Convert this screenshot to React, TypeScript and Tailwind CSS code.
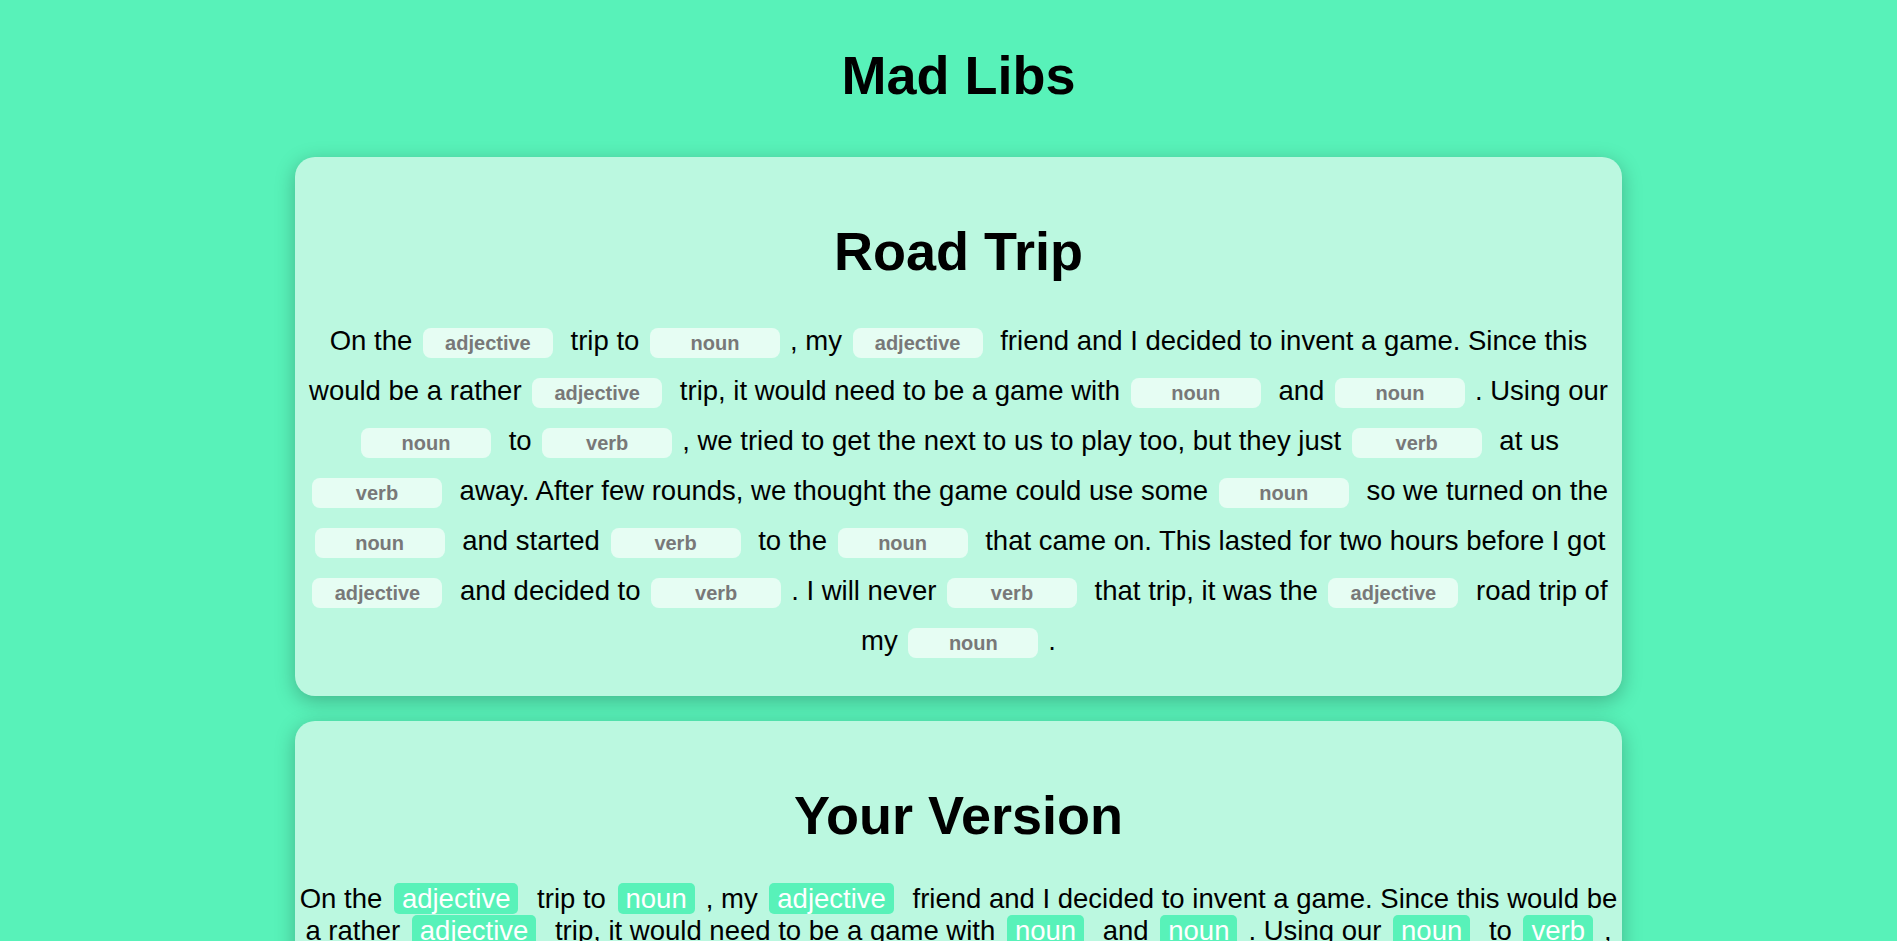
import React from 'react'

type Part = { text: string; blank: 'adjective' | 'noun' | 'verb' | null }

const story: Part[] = [
  { text: 'On the', blank: 'adjective' },
  { text: ' trip to', blank: 'noun' },
  { text: ', my', blank: 'adjective' },
  { text: ' friend and I decided to invent a game. Since this would be a rather', blank: 'adjective' },
  { text: ' trip, it would need to be a game with', blank: 'noun' },
  { text: ' and', blank: 'noun' },
  { text: '. Using our', blank: 'noun' },
  { text: ' to', blank: 'verb' },
  { text: ', we tried to get the next to us to play too, but they just', blank: 'verb' },
  { text: ' at us', blank: 'verb' },
  { text: ' away. After few rounds, we thought the game could use some', blank: 'noun' },
  { text: ' so we turned on the', blank: 'noun' },
  { text: ' and started', blank: 'verb' },
  { text: ' to the', blank: 'noun' },
  { text: ' that came on. This lasted for two hours before I got', blank: 'adjective' },
  { text: ' and decided to', blank: 'verb' },
  { text: '. I will never', blank: 'verb' },
  { text: ' that trip, it was the', blank: 'adjective' },
  { text: ' road trip of my', blank: 'noun' },
  { text: '.', blank: null },
]

function Card({ title, children }: { title: string; children: React.ReactNode }) {
  return (
    <div className="rounded-[20px] bg-[#bbf8e0] pt-[63px] pb-[30px] text-center shadow-[0_5px_20px_rgba(0,0,0,0.25)]">
      <h2 className="text-[54px] font-bold leading-[62px]">{title}</h2>
      {children}
    </div>
  )
}

export default function App() {
  return (
    <div className="min-h-screen bg-[#58f2b9] pt-[44px] pb-10 pl-[20px] font-['Liberation_Sans',Arial,sans-serif] text-black">
      <h1 className="text-center text-[54px] font-bold leading-[62px]">Mad Libs</h1>

      <div className="mx-auto mt-[51px] flex w-[70vw] flex-col gap-[25px]">
        {/* Template with empty blanks */}
        <Card title="Road Trip">
          <p className="mt-[34px] text-[27.5px] leading-[50px]">
            {story.map((part, i) => (
              <React.Fragment key={i}>
                {part.text}
                {part.blank && (
                  <>
                    {' '}
                    <span className="ml-[3px] mr-[10px] inline-block h-[30px] w-[130px] rounded-[8px] bg-[#e6fdf3] align-middle text-[20px] font-bold leading-[30px] text-[#787878]">
                      {part.blank}
                    </span>
                  </>
                )}
              </React.Fragment>
            ))}
          </p>
        </Card>

        {/* Filled-in story */}
        <Card title="Your Version">
          <p className="mt-[37px] text-[27.5px] leading-[normal]">
            {story.map((part, i) => (
              <React.Fragment key={i}>
                {part.text}
                {part.blank && (
                  <>
                    {' '}
                    <span className="ml-[4px] mr-[11px] rounded-[5px] bg-[#58f2b9] px-[8px] text-white">
                      {part.blank}
                    </span>
                  </>
                )}
              </React.Fragment>
            ))}
          </p>
        </Card>
      </div>
    </div>
  )
}
